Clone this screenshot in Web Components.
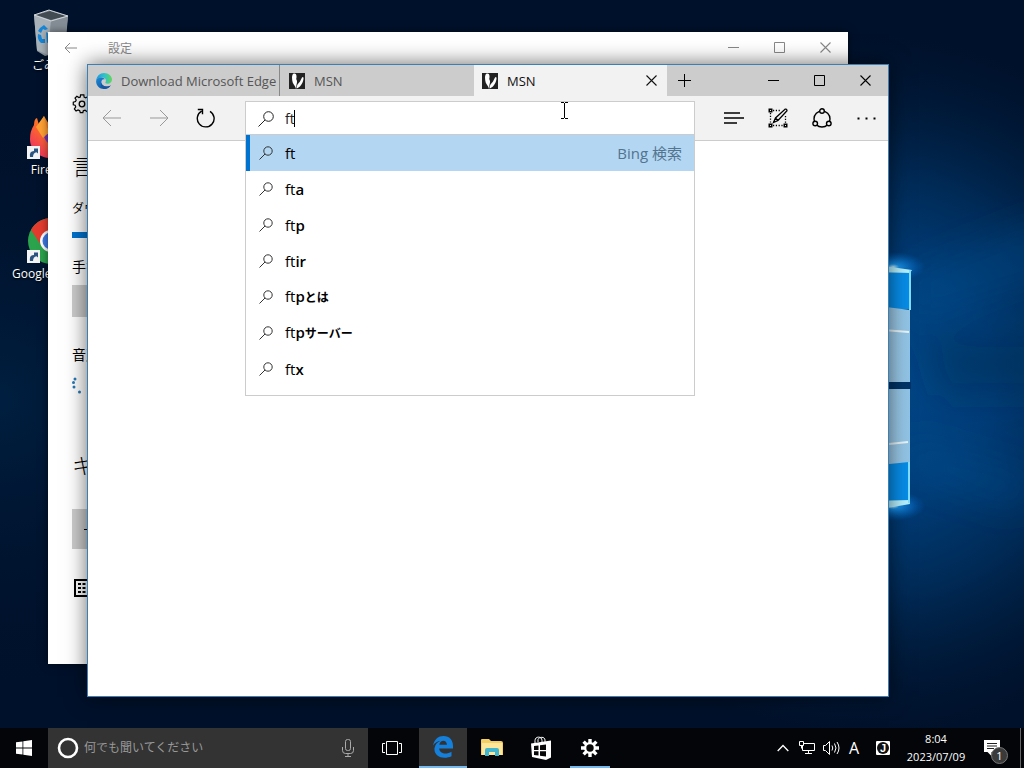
<!DOCTYPE html>
<html lang="ja">
<head>
<meta charset="utf-8">
<meta name="viewport" content="width=device-width">
<title>Desktop</title>
<style>
body{margin:0;background:#00112b;font-family:"Open Sans","Noto Sans CJK JP",sans-serif;font-size:14px;color:#000}
</style>
</head>
<body>
<desk-top></desk-top>
<script>
const define=(name,css,html,setup)=>{
  const t=document.createElement('template');
  t.innerHTML=`<style>*{box-sizing:border-box}svg{display:block;flex:none}button{border:0;padding:0;margin:0;background:none;font:inherit;color:inherit;display:flex;align-items:center;justify-content:center}${css}</style>${html}`;
  customElements.define(name,class extends HTMLElement{
    static get observedAttributes(){return ['name','icon'];}
    constructor(){super();this.attachShadow({mode:'open'}).append(t.content.cloneNode(true));}
    connectedCallback(){if(setup)setup(this,this.shadowRoot);}
    attributeChangedCallback(){if(setup&&this.isConnected)setup(this,this.shadowRoot);}
  });
};

const icons={
back:[20,18,'<path d="M19 9H1M9 1L1 9l8 8" fill="none" stroke="currentColor"/>'],
forward:[20,18,'<path d="M1 9h18M11 1l8 8-8 8" fill="none" stroke="currentColor"/>'],
smallback:[14,14,'<path d="M13 7H1M6 2L1 7l5 5" fill="none" stroke="currentColor"/>'],
refresh:[20,20,'<path d="M14 3.3A8.4 8.4 0 1 1 5.6 3.2M1.800 1.500h4.700v4.700" fill="none" stroke="currentColor" stroke-width="1.400"/>'],
search:[16,16,'<circle cx="10.500" cy="5.500" r="4.800" fill="none" stroke="currentColor"/><path d="M7 9L.5 15.500" stroke="currentColor"/>'],
find:[14,14,'<circle cx="9" cy="5" r="4.200" fill="none" stroke="currentColor"/><path d="M6 8L.5 13.500" stroke="currentColor"/>'],
min:[11,11,'<path d="M0 5.500h11" stroke="currentColor"/>'],
max:[11,11,'<path d="M.5.5h10v10H.5z" fill="none" stroke="currentColor"/>'],
close:[11,11,'<path d="M.5.5l10 10M10.500.5l-10 10" fill="none" stroke="currentColor" stroke-width="1.100"/>'],
plus:[13,13,'<path d="M0 6.500h13M6.500 0v13" stroke="currentColor"/>'],
hub:[20,12,'<path d="M0 1h16M0 6h20M0 11h13" stroke="currentColor" stroke-width="1.500"/>'],
note:[20,20,'<path d="M5 2.500h8M2.500 5v10M17.500 8v7M5 17.500h10" fill="none" stroke="currentColor" stroke-width="1.300" stroke-dasharray="1.200 1.600"/><path d="M.5.5h4v4h-4zM.5 15.500h4v4h-4zM15.500 15.500h4v4h-4z" fill="currentColor"/><path d="M2 2h1v1H2zM2 17h1v1H2zM17 17h1v1h-1z" fill="#f2f2f2"/><path d="M5.500 14.500l2-4.500L17 1.200q1.800-.6 2 1.500L10 12.500zM7.500 10l2.500 2.500" fill="#f2f2f2" stroke="currentColor" stroke-width="1.300"/>'],
share:[20,20,'<circle cx="10" cy="11" r="8" fill="none" stroke="currentColor" stroke-width="1.400"/><g fill="#f2f2f2" stroke="currentColor" stroke-width="1.400"><circle cx="10" cy="3" r="2.300"/><circle cx="3.200" cy="15.500" r="2.300"/><circle cx="16.800" cy="15.500" r="2.300"/></g>'],
more:[19,3,'<path d="M.5.5h2v2h-2zM8.500.5h2v2h-2zM16.500.5h2v2h-2z" fill="currentColor"/>'],
edgenew:[16,16,'<defs><linearGradient id="a" x1="0" x2="1"><stop offset="0" stop-color="#1c9ae0"/><stop offset=".55" stop-color="#30c4c8"/><stop offset="1" stop-color="#63d756"/></linearGradient><linearGradient id="b" x1="0" y1="0" x2="1" y2="1"><stop offset="0" stop-color="#1b8bd4"/><stop offset="1" stop-color="#10459b"/></linearGradient></defs><path d="M.2 7.500C.6 3 4 0 8 0c4.600 0 8 3.200 8 6.600 0 2.700-2 4.200-4.200 4.200-2 0-2.900-.8-2.300-1.500.9-1.300.7-4.600-3-4.800C3.500 4.300 1 5.500.2 7.500z" fill="url(#a)"/><path d="M.1 8C.3 5.500 3 4.300 5.800 4.600c1 .1 2.300.7 3 1.700C6 5.700 5 8 5.500 10c.7 3.300 5 5 9.300 2.200C13 15 10.500 16 8 16 3.500 16 0 12.500.1 8z" fill="url(#b)"/><path d="M5.500 10c.7 3.300 5 5 9.300 2.200-1.500 2.600-4 3.800-6.300 3.800C5 15 4.600 12 5.500 10z" fill="#16579f"/>'],
msn:[16,16,'<path d="M0 0h16v16H0z" fill="#222"/><path d="M4 1c3-1.500 4.200 1.500 3.200 5 1.300 2 .8 4 .3 5.500L7 16c-.5-3-2.500-4.500-3.300-6.500C3 7 2.500 3 4 1z" fill="#fff"/><path d="M7.500 15.500C8 11 9.500 10.500 11 8.500l2-4c1-1.500 2 0 1.400 2C13.500 11 11 14.500 7.500 15.500z" fill="#fff"/>'],
gear:[20,20,'<path d="M8.200 1.500h3.600l.3 2.500 1.800.8 2.100-1.500L18.500 6 17 8l.5 2 2 .7v2.600l-2.500.5-.8 1.600 1.300 2.200-2.400 1.900-2-1.400-1.900.7-.5 2H7.900l-.6-2.200-1.800-.8-2.200 1.300-1.800-2.400L3 14.500l-.7-1.800-2-.5V9.400l2.400-.6.8-1.700L2.200 5l2-2 2.200 1.400 1.500-.6z" fill="none" stroke="currentColor" stroke-width="1.300" transform="translate(1 -.5) scale(.92)"/><circle cx="10" cy="10" r="2.800" fill="none" stroke="currentColor" stroke-width="1.300"/>'],
spin:[24,24,'<g fill="#2678b4"><circle cx="3" cy="2" r="1.500"/><circle cx="1.500" cy="5.500" r="1.500"/><circle cx="2" cy="10" r="1.500"/><circle cx="7.500" cy="15" r="1.500"/></g>'],
keyboard:[28,18,'<path d="M3 1h23v16H3z" fill="none" stroke="#000" stroke-width="2"/><path d="M6 5h17M6 9h17M6 13h17" stroke="#000" stroke-width="2" stroke-dasharray="3 1.500"/>'],
start:[16,16,'<path d="M0 2.300L6.500 1.400v6.200H0zM7.300 1.300L16 0v7.600H7.300zM0 8.400h6.500v6.200L0 13.700zM7.300 8.400H16V16l-8.700-1.300z" fill="#fff"/>'],
cortana:[22,22,'<circle cx="11" cy="11" r="9" fill="none" stroke="#fff" stroke-width="2.600"/>'],
mic:[12,18,'<rect x="3.500" y=".5" width="5" height="11" rx="2" fill="none" stroke="#aaa"/><path d="M.5 8v3.500q0 3 3 3h5q3 0 3-3V8M6 14.500V17M3 17.500h6" fill="none" stroke="#aaa"/>'],
task:[20,14,'<path d="M4.500.5h11v13h-11zM3 2.500H.5v9H3M17 2.500h2.500v9H17" fill="none" stroke="#fff"/>'],
edge:[20,22,'<path d="M0 9.500C1.500 3 5.500 0 10.500 0 16.500 0 20 4 20 10v2.500H6.200c.3 5.500 7.500 6.200 12.300 3.200v4.600C10 24 .7 20.500 1.500 12.300 2 8.500 4.500 6 7.500 4.700 4.500 5.200 2 6.500 0 9.500zM6.300 8.800h7.600c.2-5.200-7-5.400-7.600 0z" fill="#1580dc"/>'],
folder:[22,20,'<path d="M0 2q0-1 1-1h7l2 2h10q2 0 2 2v12H0z" fill="#f4cf65"/><path d="M1 5h20v12H1z" fill="#fde69a"/><path d="M4 18v-6q0-2 2-2h10q2 0 2 2v6h-4v-4H8v4z" fill="#42b5cf"/>'],
store:[22,24,'<path d="M5 7V4.500C5 0 12 0 12 4.500V6M8 6V3.500C9 .5 15 .5 15 4v2" fill="none" stroke="#fff"/><path d="M1 7.500L21 4.500v17L16 24 2 21z" fill="#fff"/><path d="M4 10l4.500-.5V14H4zM10 9.300l6-.8V14h-6zM4 15.300h4.500v4.200L4 19zM10 15.300h6v5.200l-6-.8z" fill="#080808"/>'],
cog:[18,18,'<path d="M9 0v18M0 9h18M2.600 2.600l12.800 12.800M15.400 2.600L2.600 15.400" stroke="#fff" stroke-width="3.400"/><circle cx="9" cy="9" r="6" fill="#fff"/><circle cx="9" cy="9" r="3.700" fill="#090909"/>'],
chev:[12,8,'<path d="M.7 7L6 1.500 11.300 7" fill="none" stroke="#fff" stroke-width="1.300"/>'],
net:[16,14,'<path d="M5 2.500h10.500v7H3.500V5M9.500 9.500v3M6 12.500h7M.5.5h4v4h-4zM2.500 4.500v3" fill="none" stroke="#fff"/>'],
vol:[17,14,'<path d="M.5 4.500h2l4-4v13l-4-4h-2zM9 4.500q1.500 2.500 0 5M11.500 2.500q3 4.500 0 9M14 1q4 6 0 12" fill="none" stroke="#fff"/>'],
ime:[14,14,'<rect width="14" height="14" rx="1" fill="#fff"/><circle cx="7" cy="7" r="6" fill="#111"/><text x="7" y="11" text-anchor="middle" font-family="Liberation Sans" font-weight="700" font-size="11" fill="#fff">J</text>'],
msg:[18,18,'<path d="M1 1h16v12H8.500v4L4.500 13H1z" fill="#fff"/><path d="M4 4.500h10M4 7h10M4 9.500h7" stroke="#222"/>'],
bin:[48,48,'<path d="M8 6l15-5 19 6-3 35-20 5-8-5z" fill="#8d969e"/><path d="M8 6l17 6-3 34-11-5z" fill="#a9b2b8"/><path d="M25 12l17-5-4 33-16 6z" fill="#858e96"/><path d="M10 6l14-4 16 5-15 4z" fill="#434b52"/><path d="M8 6l15-5 19 6-17 5z" fill="none" stroke="#cfd4d8"/><path d="M14 19l4-3 4 4-3 1-2-1-2 4-3-2zM12 25l3 1 1 4h3v4h-4q-4-3-3-9zM20 23l3 2v8l-2 1z" fill="#1687d8"/>'],
firefox:[48,48,'<defs><linearGradient id="f" x1="1" y1="0" x2="0" y2="1"><stop offset="0" stop-color="#ffd43b"/><stop offset=".5" stop-color="#ff7026"/><stop offset="1" stop-color="#e81d72"/></linearGradient></defs><path d="M8 12Q8 6 11 5l2 7 5-9 6 10 12 1q9 3 9 13c0 12-8 18-20 18S4 37 4 26Q4 18 8 12z" fill="url(#f)"/><path d="M18 24q5-6 12-3l5 10q-12 5-17-7z" fill="#7137b8"/><path d="M10 14l8-11 3 12 9 5-9 1-4 4z" fill="#ffa033"/>'],
chrome:[48,48,'<circle cx="25" cy="24" r="23" fill="#2ba24c"/><path d="M5 13A23 23 0 0 1 46 14H25L15 28z" fill="#e33b2e"/><path d="M25 14h21a23 23 0 0 1-22 33L34 29z" fill="#fbc116"/><circle cx="25" cy="24" r="11" fill="#fff"/><circle cx="25" cy="24" r="8.500" fill="#3c78e6"/>'],
shortcut:[13,13,'<path d="M0 0h13v13H0z" fill="#f4f4f4"/><path d="M3 11Q2 5 7 5V2.500h4v5L9.500 6.300Q6 7 6 11z" fill="#2b5580"/>'],
ibeam:[9,17,'<path d="M1 .5h3M5 .5h3M4.500 1v15M1 16.500h3M5 16.500h3" fill="none" stroke="#000"/>']
};
define('ui-icon',':host{display:block;flex:none}','<span></span>',(h,r)=>{
  const icon=icons[h.getAttribute('name')];
  if(!icon)return;
  const [w,ht,b]=icon;
  r.querySelector('span').innerHTML=`<svg width="${w}" height="${ht}" viewBox="0 0 ${w} ${ht}" aria-hidden="true">${b}</svg>`;
});

define('wall-paper',':host{display:block;position:absolute;inset:0;overflow:hidden}svg{width:100%;height:100%}',
`<svg viewBox="0 0 1024 768" preserveAspectRatio="xMidYMid slice" aria-hidden="true"><defs>
<radialGradient id="g" gradientUnits="userSpaceOnUse" cx="870" cy="385" r="350"><stop offset="0" stop-color="#004a8c"/><stop offset=".35" stop-color="#003c76"/><stop offset=".6" stop-color="#002a56"/><stop offset="1" stop-color="#001c3c" stop-opacity="0"/></radialGradient>
<radialGradient id="l" gradientUnits="userSpaceOnUse" cx="0" cy="400" r="300"><stop offset="0" stop-color="#001f40"/><stop offset="1" stop-color="#00112b" stop-opacity="0"/></radialGradient>
<radialGradient id="s"><stop offset="0" stop-color="#c8f4ff"/><stop offset=".2" stop-color="#1ca0ff" stop-opacity=".8"/><stop offset="1" stop-color="#006bd0" stop-opacity="0"/></radialGradient>
<linearGradient id="p" x1="0" x2="1"><stop offset="0" stop-color="#a9d0ea"/><stop offset="1" stop-color="#90c4e6"/></linearGradient>
<filter id="blur" x="-50%" y="-50%" width="200%" height="200%"><feGaussianBlur stdDeviation="18"/></filter></defs>
<path d="M0 0h1024v768H0z" fill="#00112b"/><path d="M0 0h1024v768H0z" fill="url(#l)"/><path d="M500 0h524v768H500z" fill="url(#g)"/>
<g filter="url(#blur)"><path d="M905 275l150-60v60l-150 50zM905 440l140 40-30 30-115-40z" fill="#00559a" opacity=".3"/><path d="M920 335h120v60H940z" fill="#002650" opacity=".35"/></g>
<ellipse cx="893" cy="267" rx="32" ry="15" fill="url(#s)"/><ellipse cx="893" cy="506" rx="32" ry="15" fill="url(#s)"/>
<path d="M870 272l40 1v36H870z" fill="#078de8"/><path d="M870 305l40 5v72h-40z" fill="url(#p)"/><path d="M870 389h40v74l-40 4z" fill="url(#p)"/><path d="M870 466l39-4v38l-39 2z" fill="#078de8"/>
<path d="M870 329l39 3M870 446l38-4" stroke="#eaf6fa" stroke-width="2"/><path d="M870 382h41v7h-41z" fill="#003466"/>
<path d="M870 264l42 6-2 3-40-1zM870 501l39-1 1 4-40 7z" fill="#b6f2ff"/><path d="M910 270v40M909 462v41" stroke="#82deff" stroke-width="2"/></svg>`);

define('desk-icon',`:host{display:block;width:76px;color:#fff}a{display:grid;justify-items:center;grid-template-rows:48px 18px;color:inherit;text-decoration:none;position:relative}span{font-size:12px;line-height:18px;white-space:nowrap;text-shadow:0 1px 2px #000}:host([leading]) span{justify-self:start}.s{position:absolute;left:15px;top:33px}:host(:not([linked])) .s{display:none}`,
`<a href="#"><ui-icon></ui-icon><ui-icon class="s" name="shortcut"></ui-icon><span><slot></slot></span></a>`,(h,r)=>{const i=r.querySelector('ui-icon');i.setAttribute('name',h.getAttribute('icon'));});

define('window-controls',':host{display:flex;align-self:stretch;flex:none}button{width:46px}',
`<button aria-label="最小化"><ui-icon name="min"></ui-icon></button><button aria-label="最大化"><ui-icon name="max"></ui-icon></button><button aria-label="閉じる"><ui-icon name="close"></ui-icon></button>`);

define('settings-window',`:host{display:block;background:#fff;overflow:hidden;box-shadow:0 0 8px #0008}
header{display:flex;height:31px;align-items:center;color:#888;font-size:12px;justify-content:space-between}.t{display:flex;align-items:center}.b{width:46px;height:31px}.t span{margin-left:14px}
main{padding:31px 24px 0;display:flex;flex-direction:column;align-items:flex-start}
h1,h2,p{margin:0;font-weight:400;white-space:nowrap}h1,h2{font-size:22px;line-height:32px;font-weight:300}p{line-height:20px}
h1{margin-top:36px}h2{margin-top:48px}.d{margin-top:17px;font-size:12px}.bar{width:240px;height:6px;margin-top:13px;background:#0073cf}.h{margin-top:19px}.o{margin-top:8px;background:#ccc;width:120px;height:32px}.v{margin-top:28px}.sp{margin-top:12px}.add{margin-top:28px;background:#ccc;width:280px;height:40px;justify-content:flex-start;padding-left:12px}.k{margin-top:30px}`,
`<header><div class="t"><button class="b" aria-label="戻る"><ui-icon name="smallback"></ui-icon></button><span>設定</span></div><window-controls></window-controls></header>
<main><ui-icon name="gear"></ui-icon><h1>言語</h1><p class="d">ダウンロード</p><div class="bar"></div><p class="h">手書き</p><button class="o" aria-label="手書きのオプション"></button><p class="v">音声認識</p><ui-icon class="sp" name="spin"></ui-icon><h2>キーボード</h2><button class="add" aria-label="キーボードの追加"><ui-icon name="plus"></ui-icon></button><ui-icon class="k" name="keyboard"></ui-icon></main>`);

define('browser-tab',`:host{display:flex;flex:0 1 193px;min-width:0;align-items:center;gap:9px;padding:0 10px 0 8px;color:#555;font-size:13px;line-height:30px;white-space:nowrap;align-self:stretch}
:host([divided]){border-right:1px solid #888;flex-basis:192px;padding-right:0;margin-right:1px}:host([active]){background:#f2f2f2;color:#111}
button{margin-left:auto;width:12px;height:20px}:host(:not([active])) button{display:none}`,
`<ui-icon></ui-icon><span><slot></slot></span><button aria-label="タブを閉じる"><ui-icon name="close"></ui-icon></button>`,(h,r)=>r.querySelector('ui-icon').setAttribute('name',h.getAttribute('icon')));

define('suggest-row',`:host{display:block}button{width:100%;height:36px;justify-content:flex-start;padding:0 12px 0 9px;border-left:4px solid transparent;font-size:15px;line-height:24px;text-align:left}ui-icon{margin-right:12px;color:#333}.n{margin-left:auto;color:#52748f}:host([selected]) button{background:#b3d6f2;border-left-color:#0073d0}::slotted(b){font-weight:600}`,
`<button><ui-icon name="find"></ui-icon><span><slot></slot></span><span class="n"><slot name="note"></slot></span></button>`);

define('address-box',`:host{display:block;position:relative;flex:1;min-width:0;align-self:flex-end}
.f{display:flex;align-items:center;height:34px;background:#fff;border:1px solid #ccc;border-bottom:0;padding-left:12px;color:#222}
input{margin:0 0 0 11px;border:0;padding:0;outline:0;background:none;font:14px/20px "Open Sans","Noto Sans CJK JP",sans-serif;width:9px;field-sizing:content;color:#222}i{width:1px;height:17px;background:#000}
.list{position:absolute;z-index:1;left:0;right:0;top:33px;background:#fff;border:1px solid #ccc;padding-bottom:8px}
.j{font-size:12px}`,
`<div class="f"><ui-icon name="search"></ui-icon><input aria-label="検索または Web アドレスを入力" value="ft"><i></i></div>
<div class="list"><suggest-row selected>ft<span slot="note">Bing 検索</span></suggest-row><suggest-row>ft<b>a</b></suggest-row><suggest-row>ft<b>p</b></suggest-row><suggest-row>ft<b>ir</b></suggest-row><suggest-row>ft<b>p<span class="j">とは</span></b></suggest-row><suggest-row>ft<b>p<span class="j">サーバー</span></b></suggest-row><suggest-row>ft<b>x</b></suggest-row></div>`);

define('edge-window',`:host{display:flex;flex-direction:column;background:#fff;border:1px solid #3c7fb5;box-shadow:0 0 20px #0009}
header{display:flex;height:31px;background:#ccc}.tabs{display:flex;flex:1;min-width:0}.new{width:34px;flex:none}
nav{display:flex;height:45px;background:#f2f2f2;border-bottom:1px solid #ccc;align-items:center}.l,.r{display:flex;align-self:stretch}.l button{width:47px}.l .off{color:#999}.r button{width:44px}address-box{margin:0 17px 5px 16px}main{flex:1}`,
`<header><div class="tabs"><browser-tab icon="edgenew" divided>Download Microsoft Edge</browser-tab><browser-tab icon="msn">MSN</browser-tab><browser-tab icon="msn" active>MSN</browser-tab><button class="new" aria-label="新しいタブ"><ui-icon name="plus"></ui-icon></button></div><window-controls></window-controls></header>
<nav><div class="l"><button class="off" aria-label="戻る"><ui-icon name="back"></ui-icon></button><button class="off" aria-label="進む"><ui-icon name="forward"></ui-icon></button><button aria-label="更新"><ui-icon name="refresh"></ui-icon></button></div><address-box></address-box><div class="r"><button aria-label="ハブ"><ui-icon name="hub"></ui-icon></button><button aria-label="Web ノート"><ui-icon name="note"></ui-icon></button><button aria-label="共有"><ui-icon name="share"></ui-icon></button><button aria-label="その他"><ui-icon name="more"></ui-icon></button></div></nav><main></main>`);

define('task-bar',`:host{display:flex;position:relative;height:40px;background:#030508;color:#fff;justify-content:space-between}
.l,.r{display:flex;min-width:0}.l>button{width:49px;flex:none;position:relative}.l>.st,.l>.tv{width:48px}.tv{margin-right:3px}
label{display:flex;align-items:center;width:320px;background:#333;padding:0 14px 0 9px;gap:5px}input{flex:1;min-width:0;border:0;padding:0;background:none;outline:0;font:12px/20px "Open Sans","Noto Sans CJK JP",sans-serif;color:#999}input::placeholder{color:#999;opacity:1}
.l>.on{background:#333;border-bottom:2px solid #76b9ed;width:48px}.run::after{content:"";position:absolute;inset:auto 4px 0 5px;height:2px;background:#76b9ed}
.r button{width:24px;flex:none}.r .a{font-size:16px;width:22px}.r .j{width:36px}.r .c{display:grid;width:70px;align-content:center;justify-items:center;font-size:11px;line-height:18px}.r .m{width:42px;position:relative}.m span{position:absolute;left:20px;top:19px;width:17px;height:17px;border-radius:50%;background:#3a3a3a;border:1px solid #777;font-size:11px;line-height:15px;text-align:center}.r .e{border-left:1px solid #666;width:4px;margin-left:7px}`,
`<div class="l"><button class="st" aria-label="スタート"><ui-icon name="start"></ui-icon></button><label><ui-icon name="cortana"></ui-icon><input aria-label="検索" placeholder="何でも聞いてください"><ui-icon name="mic"></ui-icon></label><button class="tv" aria-label="タスク ビュー"><ui-icon name="task"></ui-icon></button><button class="on" aria-label="Edge"><ui-icon name="edge"></ui-icon></button><button aria-label="エクスプローラー"><ui-icon name="folder"></ui-icon></button><button aria-label="ストア"><ui-icon name="store"></ui-icon></button><button class="run" aria-label="設定"><ui-icon name="cog"></ui-icon></button></div>
<div class="r"><button aria-label="隠れているインジケーター"><ui-icon name="chev"></ui-icon></button><button aria-label="ネットワーク"><ui-icon name="net"></ui-icon></button><button aria-label="音量"><ui-icon name="vol"></ui-icon></button><button class="a">A</button><button class="j" aria-label="IME"><ui-icon name="ime"></ui-icon></button><button class="c"><span>8:04</span><span>2023/07/09</span></button><button class="m" aria-label="通知"><ui-icon name="msg"></ui-icon><span>1</span></button><button class="e" aria-label="デスクトップの表示"></button></div>`);

define('desk-top',`:host{display:grid;grid-template-rows:1fr auto;min-height:100vh;position:relative;overflow:hidden}
.area{position:relative}.icons{position:relative;display:flex;flex-direction:column;gap:38px;padding:9px 10px 9px 12px}
settings-window{position:absolute;left:48px;right:176px;top:32px;bottom:64px}edge-window{position:absolute;left:87px;right:135px;top:64px;bottom:31px}.p{position:absolute;left:560px;top:102px;z-index:5}`,
`<wall-paper></wall-paper><div class="area"><div class="icons"><desk-icon icon="bin">ごみ箱</desk-icon><desk-icon icon="firefox" linked>Firefox</desk-icon><desk-icon icon="chrome" linked leading>Google</desk-icon></div><settings-window></settings-window><edge-window></edge-window><ui-icon class="p" name="ibeam"></ui-icon></div><task-bar></task-bar>`);
</script>
</body>
</html>
